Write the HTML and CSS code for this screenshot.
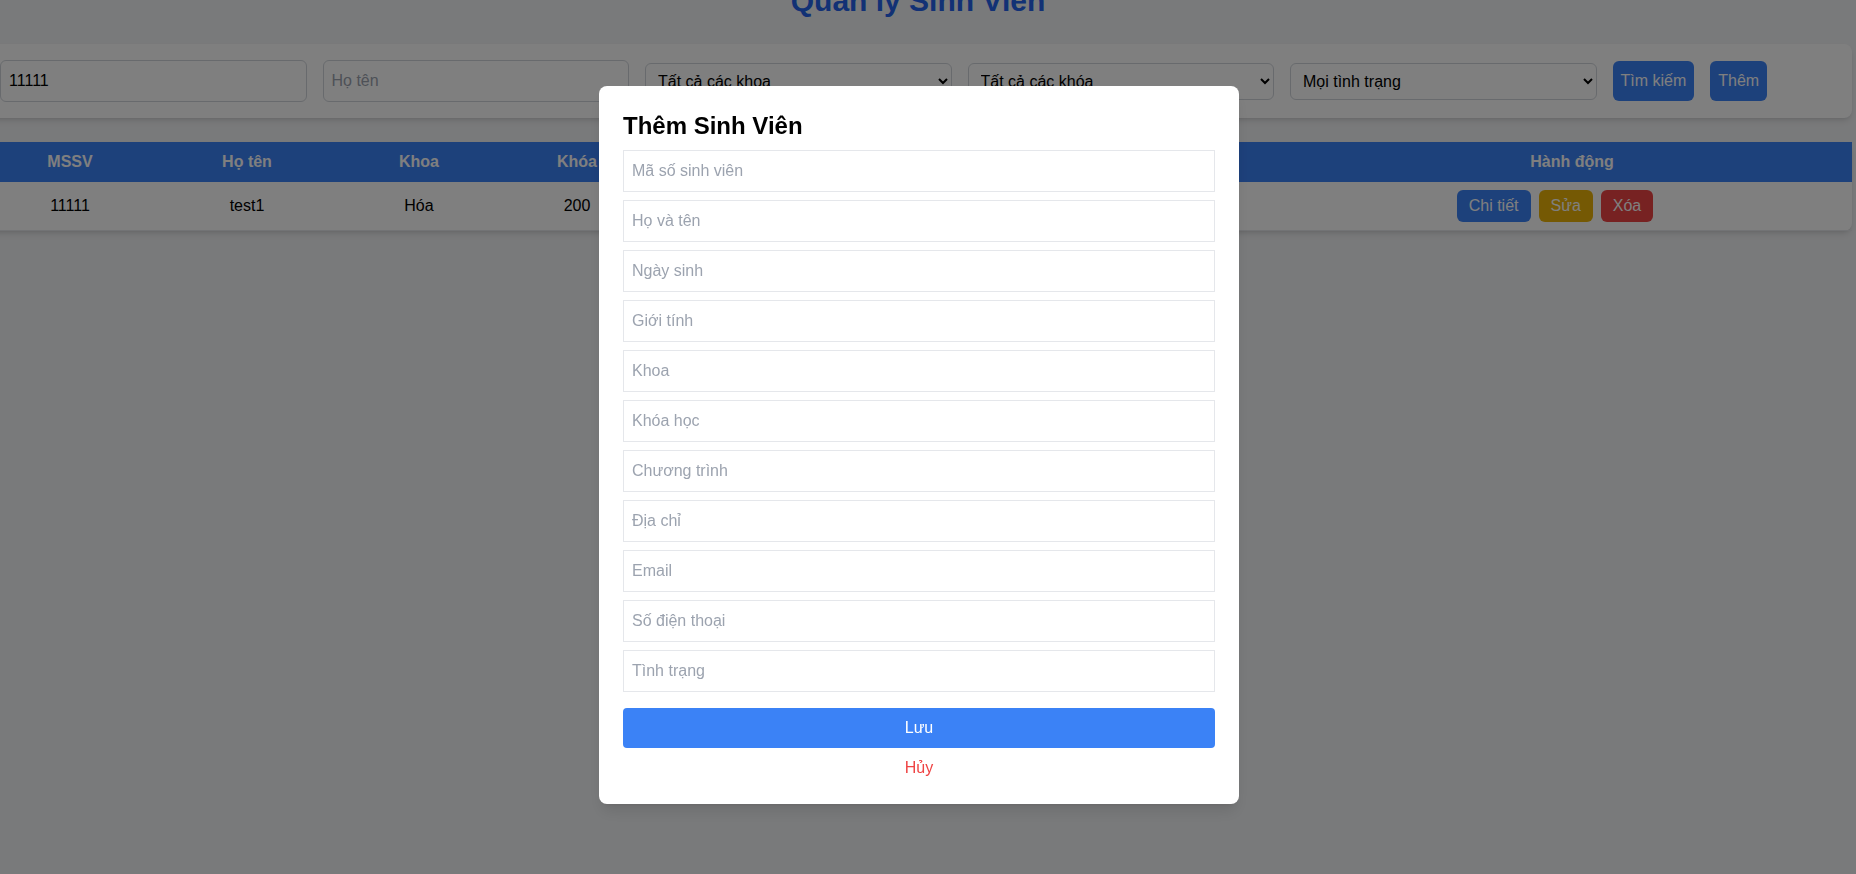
FILE: index.html
```html
<!DOCTYPE html>
<html lang="vi">
<head>
<meta charset="utf-8">
<title>Quản lý Sinh Viên</title>
<link rel="stylesheet" href="styles.css">
</head>
<body>
<div class="page">
  <h1 class="title">Quản lý Sinh Viên</h1>
  <div class="filters">
    <input class="field" type="text" value="11111">
    <input class="field" type="text" placeholder="Họ tên">
    <select class="field"><option>Tất cả các khoa</option></select>
    <select class="field"><option>Tất cả các khóa</option></select>
    <select class="field"><option>Mọi tình trạng</option></select>
    <button class="btn">Tìm kiếm</button>
    <button class="btn">Thêm</button>
  </div>
  <div class="table-wrap">
    <table class="table">
      <colgroup>
        <col class="c-mssv"><col class="c-name"><col class="c-khoa"><col class="c-khoa2"><col class="c-ct"><col class="c-tt"><col class="c-act">
      </colgroup>
      <thead>
        <tr><th>MSSV</th><th>Họ tên</th><th>Khoa</th><th>Khóa</th><th>Chương trình</th><th>Tình trạng</th><th>Hành động</th></tr>
      </thead>
      <tbody>
        <tr>
          <td>11111</td><td>test1</td><td>Hóa</td><td>200</td><td>CLC</td><td>Đang học</td>
          <td class="actions"><button class="act act-blue">Chi tiết</button><button class="act act-yellow">Sửa</button><button class="act act-red">Xóa</button></td>
        </tr>
      </tbody>
    </table>
  </div>
</div>
<div class="overlay">
  <div class="modal">
    <h2 class="modal-title">Thêm Sinh Viên</h2>
    <form class="form">
      <input class="m-input" type="text" placeholder="Mã số sinh viên">
      <input class="m-input" type="text" placeholder="Họ và tên">
      <input class="m-input" type="text" placeholder="Ngày sinh">
      <input class="m-input" type="text" placeholder="Giới tính">
      <input class="m-input" type="text" placeholder="Khoa">
      <input class="m-input" type="text" placeholder="Khóa học">
      <input class="m-input" type="text" placeholder="Chương trình">
      <input class="m-input" type="text" placeholder="Địa chỉ">
      <input class="m-input" type="text" placeholder="Email">
      <input class="m-input" type="text" placeholder="Số điện thoại">
      <input class="m-input" type="text" placeholder="Tình trạng">
      <button class="save" type="button">Lưu</button>
      <button class="cancel" type="button">Hủy</button>
    </form>
  </div>
</div>
</body>
</html>
```
FILE: styles.css
```css
* { box-sizing: border-box; }
html, body { margin: 0; height: 100%; overflow: hidden; }
body {
  background: #f3f4f6;
  font-family: "Liberation Sans", Arial, sans-serif;
  font-size: 16px;
  line-height: 24px;
  color: #000;
}
.page { width: 1868px; margin-left: -16px; }
.title {
  margin: -17px 0 25px;
  font-size: 30px;
  line-height: 36px;
  font-weight: 700;
  color: #2563eb;
  text-align: center;
}
.filters {
  display: flex;
  align-items: center;
  gap: 16px;
  padding: 16px;
  background: #fff;
  border-radius: 8px;
  box-shadow: 0 4px 6px -1px rgba(0,0,0,.1), 0 2px 4px -2px rgba(0,0,0,.1);
  margin-bottom: 24px;
}
.field {
  flex: none;
  width: 306.5px;
  margin: 0;
  padding: 8px;
  font: inherit;
  line-height: 24px;
  color: #000;
  background: #fff;
  border: 1px solid #d1d5db;
  border-radius: 6px;
}
.field::placeholder { color: #9ca3af; }
.btn {
  flex: none;
  margin: 0;
  padding: 8px;
  font: inherit;
  line-height: 24px;
  color: #fff;
  background: #3b82f6;
  border: none;
  border-radius: 6px;
}
.table-wrap {
  background: #fff;
  border-radius: 8px;
  box-shadow: 0 4px 6px -1px rgba(0,0,0,.1), 0 2px 4px -2px rgba(0,0,0,.1);
}
.table { width: 100%; border-collapse: collapse; table-layout: fixed; }
.c-mssv { width: 172px; }
.c-name { width: 182px; }
.c-khoa { width: 162px; }
.c-khoa2 { width: 154px; }
.c-ct { width: 319px; }
.c-tt { width: 319px; }
.c-act { width: 560px; }
.table thead tr { background: #3b82f6; }
.table th {
  padding: 8px;
  color: #fff;
  font-weight: 700;
  text-align: center;
}
.table td {
  padding: 8px;
  text-align: center;
  border-bottom: 1px solid #e5e7eb;
}
.table td.actions { padding-right: 42px; }
.act {
  margin: 0 8px 0 0;
  padding: 4px 12px;
  font: inherit;
  line-height: 24px;
  color: #fff;
  border: none;
  border-radius: 6px;
}
.act:last-child { margin-right: 0; }
.act-blue { background: #3b82f6; }
.act-yellow { background: #eab308; }
.act-red { background: #ef4444; }
.overlay {
  position: fixed;
  inset: 0;
  background: rgba(0,0,0,.5);
  display: flex;
  justify-content: center;
  align-items: flex-start;
  padding: 86px 18px 0 0;
}
.modal {
  width: 640px;
  padding: 24px;
  background: #fff;
  border-radius: 8px;
  box-shadow: 0 10px 15px -3px rgba(0,0,0,.1), 0 4px 6px -4px rgba(0,0,0,.1);
}
.modal-title {
  margin: 0 0 8px;
  font-size: 24px;
  line-height: 32px;
  font-weight: 700;
  color: #000;
}
.form { display: flex; flex-direction: column; }
.m-input {
  display: block;
  width: 100%;
  margin: 0 0 8px;
  padding: 8px;
  font: inherit;
  line-height: 24px;
  color: #000;
  border: 1px solid #e5e7eb;
  border-radius: 0;
  background: #fff;
}
.m-input::placeholder { color: #9ca3af; }
.save {
  margin: 8px 0 0;
  width: 100%;
  padding: 8px;
  font: inherit;
  line-height: 24px;
  color: #fff;
  background: #3b82f6;
  border: none;
  border-radius: 4px;
}
.cancel {
  margin: 8px 0 0;
  width: 100%;
  padding: 0;
  font: inherit;
  line-height: 24px;
  color: #ef4444;
  background: none;
  border: none;
}
```
